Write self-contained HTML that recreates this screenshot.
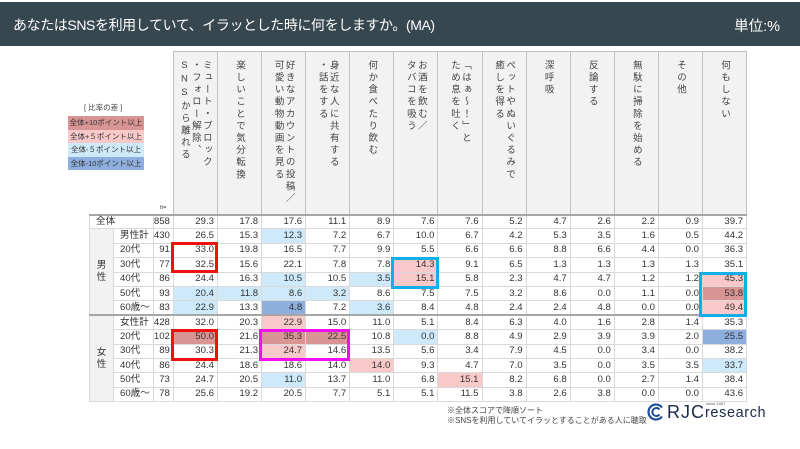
<!DOCTYPE html>
<html><head><meta charset="utf-8"><style>
*{margin:0;padding:0;box-sizing:border-box}
body{width:800px;height:449px;overflow:hidden;background:#fff;font-family:"Liberation Sans","Noto Sans CJK JP",sans-serif;position:relative;color:#333}
.bar{position:absolute;left:0;top:2px;width:800px;height:44px;background:#37474f;color:#fff}
.bar .t{position:absolute;left:13px;top:13px;font-size:14px;letter-spacing:-0.4px}
.bar .u{position:absolute;right:20px;top:13px;font-size:14.5px}
.leg{position:absolute;left:68px;width:76px;height:13.5px;font-size:7.5px;text-align:center;line-height:13.5px;color:#333;z-index:3}
table{position:absolute;left:89px;top:51px;border-collapse:collapse;table-layout:fixed;font-size:9.6px}
td{border:1px solid #d9d9d9;height:14.4px;padding:0 3px 0 0;text-align:right;line-height:12px;white-space:nowrap}
tr.h td{height:163px;vertical-align:top;text-align:center;background:#f2f2f2;border:1px solid #c0c0c0;padding:8px 0 0}
tr.h td.b{background:transparent;border:none}
.v{writing-mode:vertical-rl;text-orientation:upright;font-size:9.5px;letter-spacing:2.6px;line-height:11px;display:inline-block;text-align:left;color:#444}
td.l{text-align:left;padding-left:6px}
td.c{text-align:center;padding:0}
.dr{background:#d99594}.pk{background:#f9c9c9}.lb{background:#cde9fa}.bb{background:#8eaede}
tr.top td{border-top:2px solid #a6a6a6}
.box{position:absolute;border:3px solid}
.note{position:absolute;left:447px;font-size:8px;color:#444}
</style></head><body>
<div class="bar"><div class="t">あなたはSNSを利用していて、イラッとした時に何をしますか。(MA)</div><div class="u">単位:%</div></div>
<table>
<colgroup><col style="width:24px"><col style="width:39px"><col style="width:20px"><col span="13" style="width:44.1px"></colgroup>
<tr class="h"><td class="b"></td><td class="b"></td><td class="b" style="vertical-align:bottom;font-size:6px;text-align:center">n=</td>
<td><span class="v">ミュート・ブロック<br>・フォロー解除、<br>SNSから離れる</span></td>
<td><span class="v">楽しいことで気分転換</span></td>
<td><span class="v">好きなアカウントの投稿／<br>可愛い動物動画を見る</span></td>
<td><span class="v">身近な人に共有する<br>・話をする</span></td>
<td><span class="v">何か食べたり飲む</span></td>
<td><span class="v">お酒を飲む／<br>タバコを吸う</span></td>
<td><span class="v">「はぁ～！」と<br>ため息を吐く</span></td>
<td><span class="v">ペットやぬいぐるみで<br>癒しを得る</span></td>
<td><span class="v">深呼吸</span></td>
<td><span class="v">反論する</span></td>
<td><span class="v">無駄に掃除を始める</span></td>
<td><span class="v">その他</span></td>
<td><span class="v">何もしない</span></td></tr>
<tr class="top"><td colspan="2" class="l">全体</td><td>858</td><td>29.3</td><td>17.8</td><td>17.6</td><td>11.1</td><td>8.9</td><td>7.6</td><td>7.6</td><td>5.2</td><td>4.7</td><td>2.6</td><td>2.2</td><td>0.9</td><td>39.7</td></tr>
<tr><td rowspan="6" class="c" style="background:#f2f2f2">男<br>性</td><td class="l">男性計</td><td>430</td><td>26.5</td><td>15.3</td><td class="lb">12.3</td><td>7.2</td><td>6.7</td><td>10.0</td><td>6.7</td><td>4.2</td><td>5.3</td><td>3.5</td><td>1.6</td><td>0.5</td><td>44.2</td></tr>
<tr><td class="l">20代</td><td>91</td><td>33.0</td><td>19.8</td><td>16.5</td><td>7.7</td><td>9.9</td><td>5.5</td><td>6.6</td><td>6.6</td><td>8.8</td><td>6.6</td><td>4.4</td><td>0.0</td><td>36.3</td></tr>
<tr><td class="l">30代</td><td>77</td><td>32.5</td><td>15.6</td><td>22.1</td><td>7.8</td><td>7.8</td><td class="pk">14.3</td><td>9.1</td><td>6.5</td><td>1.3</td><td>1.3</td><td>1.3</td><td>1.3</td><td>35.1</td></tr>
<tr><td class="l">40代</td><td>86</td><td>24.4</td><td>16.3</td><td class="lb">10.5</td><td>10.5</td><td class="lb">3.5</td><td class="pk">15.1</td><td>5.8</td><td>2.3</td><td>4.7</td><td>4.7</td><td>1.2</td><td>1.2</td><td class="pk">45.3</td></tr>
<tr><td class="l">50代</td><td>93</td><td class="lb">20.4</td><td class="lb">11.8</td><td class="lb">8.6</td><td class="lb">3.2</td><td>8.6</td><td>7.5</td><td>7.5</td><td>3.2</td><td>8.6</td><td>0.0</td><td>1.1</td><td>0.0</td><td class="dr">53.8</td></tr>
<tr><td class="l">60歳～</td><td>83</td><td class="lb">22.9</td><td>13.3</td><td class="bb">4.8</td><td>7.2</td><td class="lb">3.6</td><td>8.4</td><td>4.8</td><td>2.4</td><td>2.4</td><td>4.8</td><td>0.0</td><td>0.0</td><td class="pk">49.4</td></tr>
<tr class="top"><td rowspan="6" class="c" style="background:#f2f2f2">女<br>性</td><td class="l">女性計</td><td>428</td><td>32.0</td><td>20.3</td><td class="pk">22.9</td><td>15.0</td><td>11.0</td><td>5.1</td><td>8.4</td><td>6.3</td><td>4.0</td><td>1.6</td><td>2.8</td><td>1.4</td><td>35.3</td></tr>
<tr><td class="l">20代</td><td>102</td><td class="dr">50.0</td><td>21.6</td><td class="dr">35.3</td><td class="dr">22.5</td><td>10.8</td><td class="lb">0.0</td><td>8.8</td><td>4.9</td><td>2.9</td><td>3.9</td><td>3.9</td><td>2.0</td><td class="bb">25.5</td></tr>
<tr><td class="l">30代</td><td>89</td><td>30.3</td><td>21.3</td><td class="pk">24.7</td><td>14.6</td><td>13.5</td><td>5.6</td><td>3.4</td><td>7.9</td><td>4.5</td><td>0.0</td><td>3.4</td><td>0.0</td><td>38.2</td></tr>
<tr><td class="l">40代</td><td>86</td><td>24.4</td><td>18.6</td><td>18.6</td><td>14.0</td><td class="pk">14.0</td><td>9.3</td><td>4.7</td><td>7.0</td><td>3.5</td><td>0.0</td><td>3.5</td><td>3.5</td><td class="lb">33.7</td></tr>
<tr><td class="l">50代</td><td>73</td><td>24.7</td><td>20.5</td><td class="lb">11.0</td><td>13.7</td><td>11.0</td><td>6.8</td><td class="pk">15.1</td><td>8.2</td><td>6.8</td><td>0.0</td><td>2.7</td><td>1.4</td><td>38.4</td></tr>
<tr><td class="l">60歳～</td><td>78</td><td>25.6</td><td>19.2</td><td>20.5</td><td>7.7</td><td>5.1</td><td>5.1</td><td>11.5</td><td>3.8</td><td>2.6</td><td>3.8</td><td>0.0</td><td>0.0</td><td>43.6</td></tr>
</table>
<div style="position:absolute;left:84px;top:102px;font-size:7.5px;color:#444;z-index:3">[ 比率の差 ]</div>
<div class="leg dr" style="top:116px">全体+10ポイント以上</div>
<div class="leg pk" style="top:129.5px">全体+５ポイント以上</div>
<div class="leg lb" style="top:143px">全体-５ポイント以上</div>
<div class="leg bb" style="top:156.5px">全体-10ポイント以上</div>
<div class="box" style="left:171px;top:242px;width:47px;height:31px;border-color:#f01010"></div>
<div class="box" style="left:171px;top:329px;width:47px;height:32px;border-color:#f01010"></div>
<div class="box" style="left:259px;top:329px;width:91px;height:32px;border-color:#f010f0"></div>
<div class="box" style="left:391px;top:257px;width:48px;height:32px;border-color:#12aee8"></div>
<div class="box" style="left:699px;top:272px;width:48px;height:45px;border-color:#12aee8"></div>
<div class="note" style="top:405px">※全体スコアで降順ソート</div>
<div class="note" style="top:415px">※SNSを利用していてイラッとすることがある人に聴取</div>
<svg style="position:absolute;left:647px;top:403px" width="18" height="18" viewBox="0 0 18 18"><path d="M15 4.5A7.5 7.5 0 1 0 15 13.5" fill="none" stroke="#1f4e9a" stroke-width="2.2"/><path d="M12.5 6.5A4 4 0 1 0 12.5 11.5" fill="none" stroke="#1f4e9a" stroke-width="2"/></svg>
<div style="position:absolute;left:667px;top:402px;font-size:18px;color:#1a2a4a;letter-spacing:1px">RJC</div>
<div style="position:absolute;left:706px;top:401px;font-size:4px;color:#555">since 1967</div>
<div style="position:absolute;left:705px;top:405px;font-size:14.5px;color:#1a2a4a;letter-spacing:0.6px">research</div>
</body></html>
